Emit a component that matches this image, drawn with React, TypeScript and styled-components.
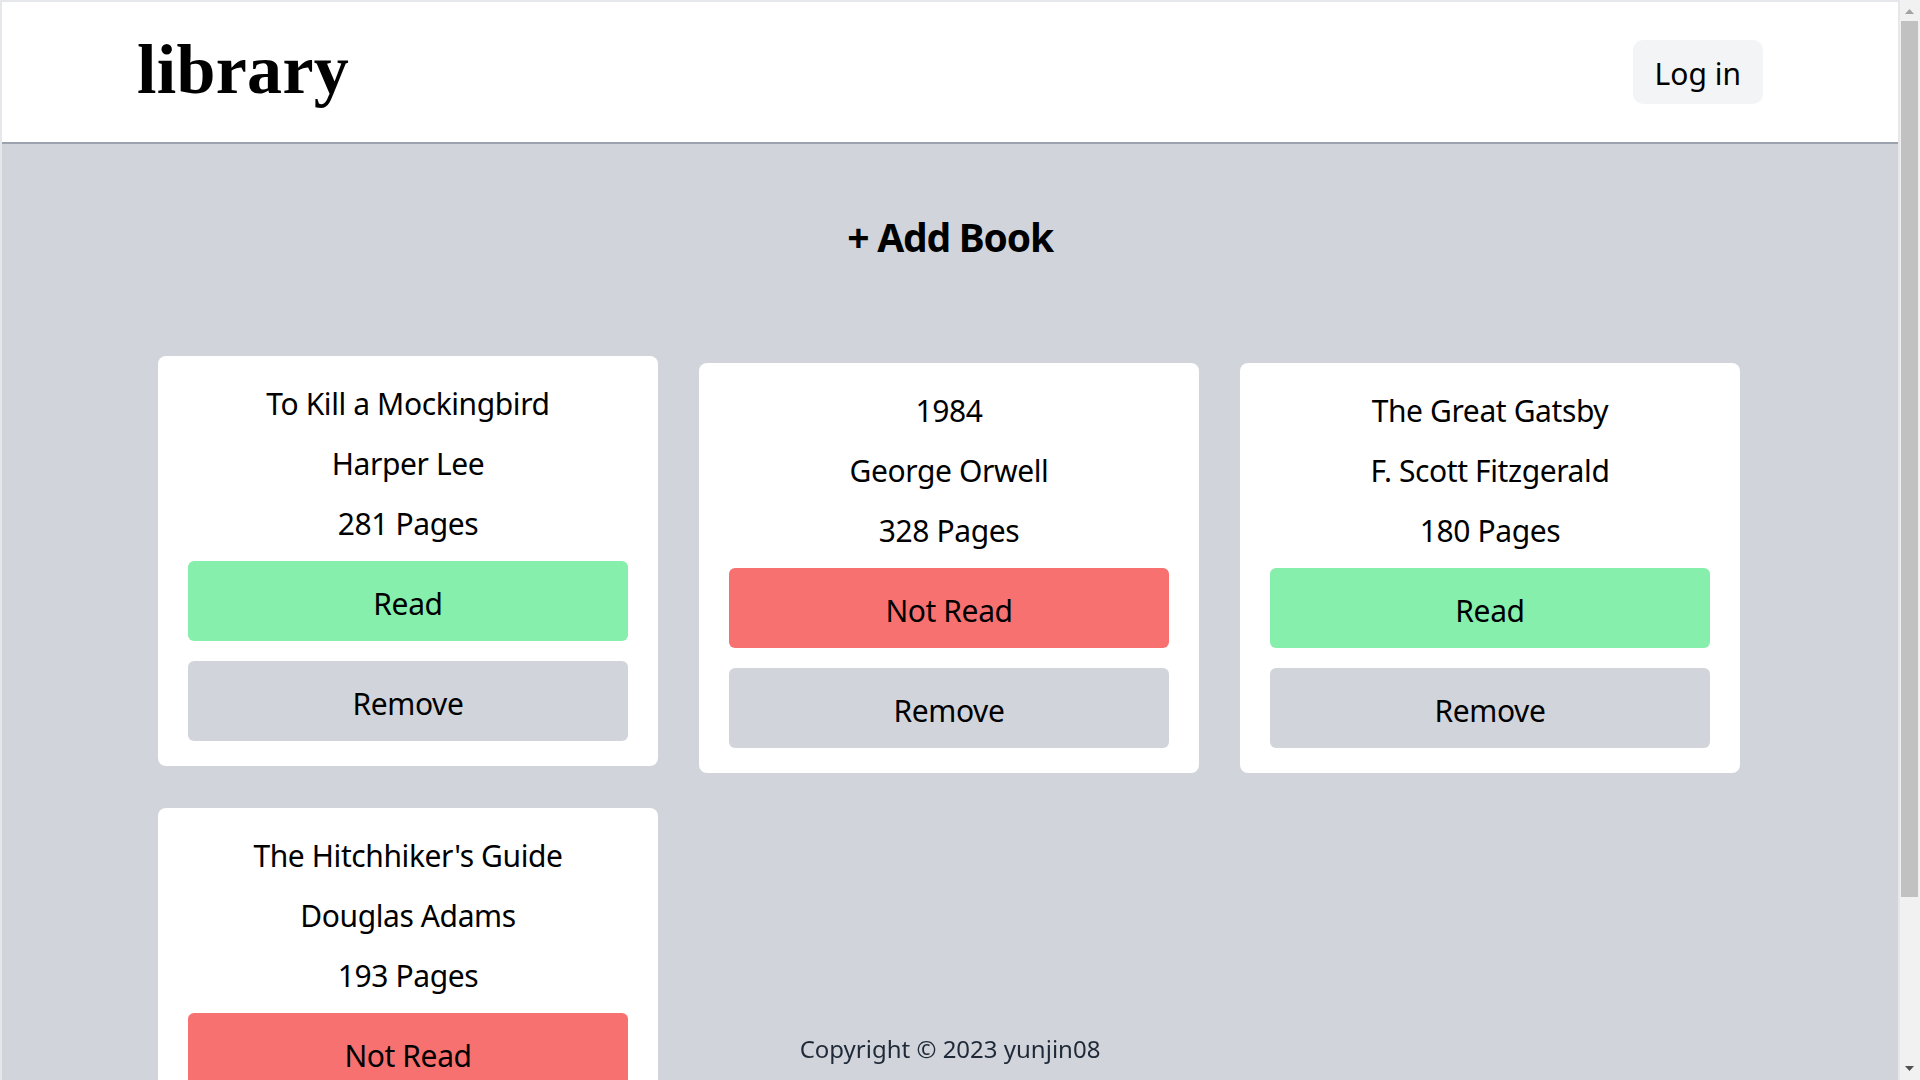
import React from "react";
import styled, { createGlobalStyle } from "styled-components";

const GlobalStyle = createGlobalStyle`
  html, body {
    margin: 0;
    height: 100%;
    overflow: hidden;
  }
  body {
    background: #d1d5db;
    font-family: "Noto Sans", "Open Sans", sans-serif;
    color: #000;
  }
`;

const Frame = styled.div`
  display: grid;
  grid-template-columns: 1fr 20px;
  height: 100vh;
`;

const Scroller = styled.div`
  height: 100vh;
  overflow-y: auto;
  background: #d1d5db;
  scrollbar-width: none;
  &::-webkit-scrollbar {
    display: none;
  }
`;

const ScrollRail = styled.div`
  display: flex;
  flex-direction: column;
  background: #f1f1f1;
  height: 100vh;
`;

const ArrowButton = styled.div`
  height: 20px;
  display: flex;
  align-items: center;
  justify-content: center;
  flex: none;
`;

const Track = styled.div`
  flex: 1;
  display: flex;
  flex-direction: column;
  padding: 1px 2px 0 1px;
`;

const Thumb = styled.div<{ $size: number }>`
  height: ${(p) => p.$size}px;
  background: #c1c1c1;
`;

const Page = styled.div`
  border: 2px solid #e5e7eb;
  background: #d1d5db;
  min-height: 100%;
  box-sizing: border-box;
`;

const Header = styled.header`
  height: 140px;
  background: #ffffff;
  border-bottom: 2px solid #9ca3af;
  display: flex;
  align-items: center;
  justify-content: space-between;
  padding: 0 135px;
`;

const Logo = styled.h1`
  margin: 0;
  font-family: "Liberation Serif", "Times New Roman", serif;
  font-weight: 700;
  font-size: 70px;
  line-height: 70px;
  padding-bottom: 4px;
  letter-spacing: 0.3px;
`;

const LoginButton = styled.button`
  height: 64px;
  padding: 3px 22px 0;
  border: none;
  border-radius: 10px;
  background: #f3f4f6;
  font-family: "Noto Sans", "Open Sans", sans-serif;
  font-size: 30px;
  font-weight: 400;
  color: #000;
  cursor: pointer;
`;

const Main = styled.main`
  display: flex;
  flex-direction: column;
  align-items: center;
  padding: 69px 0 61px;
`;

const AddButton = styled.button`
  border: none;
  background: transparent;
  padding: 0;
  font-family: "Noto Sans", "Open Sans", sans-serif;
  font-size: 39px;
  line-height: 48px;
  font-weight: 700;
  color: #000;
  cursor: pointer;
  margin-bottom: 102px;
  letter-spacing: -1.2px;
`;

const Grid = styled.section`
  display: grid;
  grid-template-columns: repeat(3, 500px);
  column-gap: 41px;
  row-gap: 35px;
  justify-content: center;
  align-items: start;
  margin-left: -2px;
`;

const Card = styled.article<{ $lifted?: boolean }>`
  background: #ffffff;
  border-radius: 8px;
  padding: 27px 30px 25px;
  display: flex;
  flex-direction: column;
  align-items: stretch;
  transform: ${(p) => (p.$lifted ? "translateY(-7px)" : "none")};
`;

const Line = styled.p`
  margin: 0 0 21px;
  padding-top: 3px;
  text-align: center;
  font-size: 30px;
  line-height: 36px;
  letter-spacing: -0.4px;
  &:nth-of-type(3) {
    margin-bottom: 19px;
  }
`;

const Actions = styled.div`
  display: flex;
  flex-direction: column;
  gap: 20px;
`;

const tones: Record<string, string> = {
  read: "#86efac",
  unread: "#f87171",
  remove: "#d1d5db",
};

const ActionButton = styled.button<{ $tone: "read" | "unread" | "remove" }>`
  height: 80px;
  padding: 5px 0 0;
  border: none;
  border-radius: 6px;
  background: ${(p) => tones[p.$tone]};
  font-family: "Noto Sans", "Open Sans", sans-serif;
  font-size: 30px;
  line-height: 36px;
  letter-spacing: -0.4px;
  color: #000;
  cursor: pointer;
`;

const Footer = styled.footer`
  position: fixed;
  left: 0;
  right: 20px;
  bottom: 15px;
  text-align: center;
  font-size: 24px;
  line-height: 32px;
  color: #1f2937;
`;

type Book = { title: string; author: string; pages: number; read: boolean };

const books: Book[] = [
  { title: "To Kill a Mockingbird", author: "Harper Lee", pages: 281, read: true },
  { title: "1984", author: "George Orwell", pages: 328, read: false },
  { title: "The Great Gatsby", author: "F. Scott Fitzgerald", pages: 180, read: true },
  { title: "The Hitchhiker's Guide", author: "Douglas Adams", pages: 193, read: false },
];

function Arrow({ up }: { up?: boolean }) {
  return (
    <svg width="20" height="20" viewBox="0 0 20 20">
      {up ? (
        <polygon points="5,14 14,14 9.5,9" fill="#a3a3a3" />
      ) : (
        <polygon points="5,6 14,6 9.5,11" fill="#505050" />
      )}
    </svg>
  );
}

export default function App() {
  return (
    <>
      <GlobalStyle />
      <Frame>
        <Scroller>
          <Page>
            <Header>
              <Logo>library</Logo>
              <LoginButton>Log in</LoginButton>
            </Header>
            <Main>
              <AddButton>+ Add Book</AddButton>
              <Grid>
                {books.map((b, i) => (
                  <Card key={b.title} $lifted={i === 0}>
                    <Line>{b.title}</Line>
                    <Line>{b.author}</Line>
                    <Line>{b.pages} Pages</Line>
                    <Actions>
                      <ActionButton $tone={b.read ? "read" : "unread"}>
                        {b.read ? "Read" : "Not Read"}
                      </ActionButton>
                      <ActionButton $tone="remove">Remove</ActionButton>
                    </Actions>
                  </Card>
                ))}
              </Grid>
            </Main>
            <Footer>Copyright © 2023 yunjin08</Footer>
          </Page>
        </Scroller>
        <ScrollRail aria-hidden="true">
          <ArrowButton>
            <Arrow up />
          </ArrowButton>
          <Track>
            <Thumb $size={876} />
          </Track>
          <ArrowButton>
            <Arrow />
          </ArrowButton>
        </ScrollRail>
      </Frame>
    </>
  );
}
